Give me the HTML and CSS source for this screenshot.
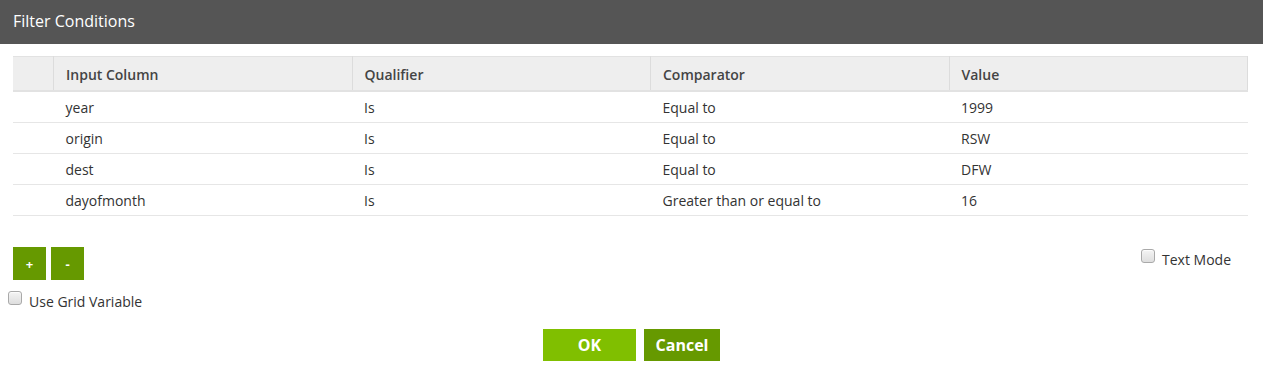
FILE: index.html
```html
<!DOCTYPE html>
<html>
<head>
    <link rel="stylesheet" href="styles.css">
</head>
<body>
    <div class="dialog">
        <div class="dialog-title">Filter Conditions</div>
        <div class="dialog-body">
            <table class="grid">
                <thead>
                    <tr>
                        <th class="sel"></th>
                        <th>Input Column</th>
                        <th>Qualifier</th>
                        <th>Comparator</th>
                        <th>Value</th>
                    </tr>
                </thead>
                <tbody>
                    <tr>
                        <td class="sel"></td>
                        <td>year</td>
                        <td>Is</td>
                        <td>Equal to</td>
                        <td>1999</td>
                    </tr>
                    <tr>
                        <td class="sel"></td>
                        <td>origin</td>
                        <td>Is</td>
                        <td>Equal to</td>
                        <td>RSW</td>
                    </tr>
                    <tr>
                        <td class="sel"></td>
                        <td>dest</td>
                        <td>Is</td>
                        <td>Equal to</td>
                        <td>DFW</td>
                    </tr>
                    <tr>
                        <td class="sel"></td>
                        <td>dayofmonth</td>
                        <td>Is</td>
                        <td>Greater than or equal to</td>
                        <td>16</td>
                    </tr>
                </tbody>
            </table>

            <div class="row-tools">
                <div class="small-btns">
                    <button class="btn-small">+</button>
                    <button class="btn-small">-</button>
                </div>
                <label class="check text-mode"><input type="checkbox"> Text Mode</label>
            </div>
            <label class="check grid-var"><input type="checkbox"> Use Grid Variable</label>

            <div class="actions">
                <button class="btn btn-ok">OK</button>
                <button class="btn btn-cancel">Cancel</button>
            </div>
        </div>
    </div>
</body>
</html>
```

FILE: styles.css
```css
body {
    margin: 0;
    font-family: "Open Sans", Arial, sans-serif;
    background-color: white;
    color: #333;
}
.dialog-title {
    height: 44px;
    line-height: 43px;
    background-color: #555555;
    color: white;
    font-size: 16px;
    padding-left: 13px;
}
.dialog-body {
    padding: 12px 15px 0 0;
}
.grid {
    margin-left: 13px;
    width: 1235px;
    border-collapse: collapse;
    table-layout: fixed;
    font-size: 14px;
}
.grid th {
    background-color: #eeeeee;
    color: #444;
    font-weight: 600;
    text-align: left;
    height: 32px;
    padding: 1px 0 0 12px;
    border-top: 1px solid #e2e2e2;
    border-bottom: 2px solid #e2e2e2;
    border-right: 1px solid #dcdcdc;
}
.grid th.sel, .grid td.sel {
    width: 40px;
    padding: 0;
}
.grid td {
    height: 30px;
    padding: 0 0 0 12px;
    border-bottom: 1px solid #e6e6e6;
    color: #333;
}
.row-tools {
    display: flex;
    justify-content: space-between;
    align-items: flex-start;
    margin-top: 31px;
    padding-left: 13px;
}
.small-btns {
    display: flex;
    gap: 5px;
}
.btn-small {
    width: 33px;
    height: 33px;
    border: none;
    background-color: #669900;
    color: white;
    font-family: "Open Sans", Arial, sans-serif;
    font-weight: bold;
    font-size: 13px;
    padding: 0;
    cursor: pointer;
}
.check {
    display: flex;
    align-items: flex-start;
    font-size: 14px;
    line-height: 19px;
    color: #333;
}
.check input {
    appearance: none;
    -webkit-appearance: none;
    margin: 0 7px 0 0;
    width: 14px;
    height: 14px;
    border: 1px solid #a9a9a9;
    border-radius: 3px;
    background: linear-gradient(#f4f4f4, #dedede);
    box-shadow: inset 0 1px 1px rgba(255,255,255,0.8);
}
.text-mode {
    margin-top: 2px;
    margin-right: 17px;
    padding-top: 1px;
}
.text-mode input, .grid-var input {
    margin-top: -1px;
}
.grid-var {
    margin-top: 12px;
    margin-left: 8px;
}
.actions {
    display: flex;
    justify-content: center;
    gap: 8px;
    margin-top: 18px;
    padding-left: 15px;
}
.btn {
    height: 32px;
    border: none;
    color: white;
    font-family: "Open Sans", Arial, sans-serif;
    font-weight: bold;
    font-size: 16px;
    cursor: pointer;
}
.btn-ok {
    width: 93px;
    background-color: #80bf00;
}
.btn-cancel {
    width: 76px;
    background-color: #669900;
}
```
